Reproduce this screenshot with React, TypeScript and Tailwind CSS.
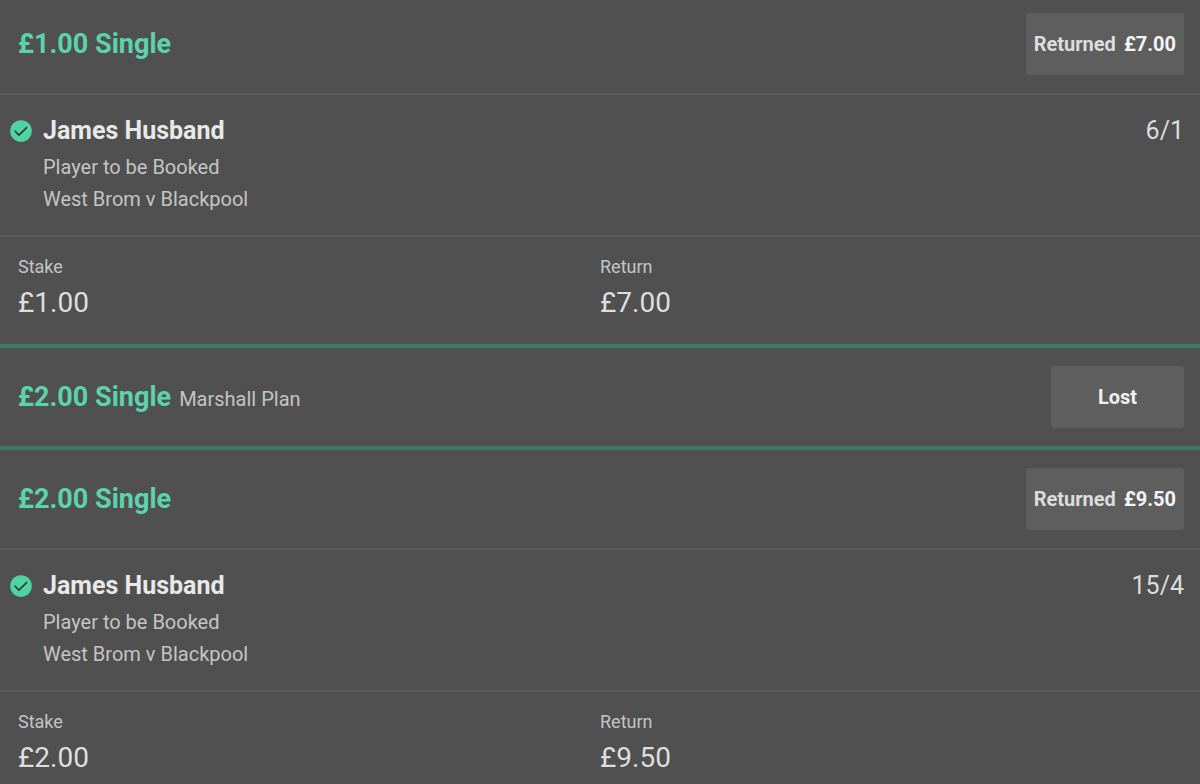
import React from 'react';

interface Selection {
  name: string;
  market: string;
  fixture: string;
  odds: string;
}

interface Bet {
  id: number;
  stake: string;
  label?: string;
  returned?: string;
  selection?: Selection;
}

const BETS: Bet[] = [
  {
    id: 1,
    stake: '£1.00',
    returned: '£7.00',
    selection: { name: 'James Husband', market: 'Player to be Booked', fixture: 'West Brom v Blackpool', odds: '6/1' },
  },
  { id: 2, stake: '£2.00', label: 'Marshall Plan' },
  {
    id: 3,
    stake: '£2.00',
    returned: '£9.50',
    selection: { name: 'James Husband', market: 'Player to be Booked', fixture: 'West Brom v Blackpool', odds: '15/4' },
  },
];

function WonIcon() {
  return (
    <svg viewBox="0 0 22 22" className="w-[22px] h-[22px] shrink-0" aria-hidden="true">
      <circle cx="11" cy="11" r="10.8" fill="#50d2a5" />
      <path d="M4.7 10.8l4.2 4.3 8.2-8" fill="none" stroke="#25352f" strokeWidth="1.5" />
    </svg>
  );
}

function BetHeader({ bet }: { bet: Bet }) {
  return (
    <header className="flex items-center justify-between pl-[18px] pr-4 py-[18px]">
      <h2 className="flex items-baseline gap-2 text-[27px] leading-8 font-bold text-[#5bd3ab]">
        {bet.stake} Single
        {bet.label && <span className="text-xl font-normal text-[#c4c4c4]">{bet.label}</span>}
      </h2>
      {bet.returned ? (
        <button type="button" className="flex items-center justify-center gap-2 h-[62px] px-2 rounded-[3px] bg-[#5e5e5e] text-xl font-bold text-[#dcdcdc]">
          Returned <span className="text-[#f4f4f4]">{bet.returned}</span>
        </button>
      ) : (
        <button type="button" className="h-[62px] w-[133px] rounded-[3px] bg-[#5e5e5e] text-xl font-bold text-[#f0f0f0]">
          Lost
        </button>
      )}
    </header>
  );
}

function BetSelection({ selection }: { selection: Selection }) {
  return (
    <div className="flex items-start justify-between border-t-2 border-[#5a5a5a] pl-[10px] pr-4 py-5">
      <div className="flex items-start gap-[11px]">
        <div className="flex h-8 items-center">
          <WonIcon />
        </div>
        <div>
          <h3 className="text-[25px] leading-8 font-bold text-[#e8e8e8]">{selection.name}</h3>
          <div className="mt-1 text-xl leading-8 text-[#c4c4c4]">
            <p>{selection.market}</p>
            <p>{selection.fixture}</p>
          </div>
        </div>
      </div>
      <span className="text-[25px] leading-8 text-[#dcdcdc]">{selection.odds}</span>
    </div>
  );
}

function Amount({ label, value }: { label: string; value: string }) {
  return (
    <div>
      <dt className="text-lg leading-6 text-[#c4c4c4]">{label}</dt>
      <dd className="mt-1 text-[28px] leading-10 text-[#dedede]">{value}</dd>
    </div>
  );
}

export default function App() {
  return (
    <main className="min-h-screen overflow-hidden bg-[#505050] font-['Roboto',sans-serif]">
      <div className="-mt-[5px] divide-y-4 divide-[#3f7a66]">
        {BETS.map((bet) => (
          <section key={bet.id}>
            <BetHeader bet={bet} />
            {bet.selection && <BetSelection selection={bet.selection} />}
            {bet.selection && (
              <dl className="grid grid-cols-2 border-t-2 border-[#5a5a5a] px-[18px] pt-[18px] pb-[21px]">
                <Amount label="Stake" value={bet.stake} />
                <Amount label="Return" value={bet.returned ?? ''} />
              </dl>
            )}
          </section>
        ))}
      </div>
    </main>
  );
}
